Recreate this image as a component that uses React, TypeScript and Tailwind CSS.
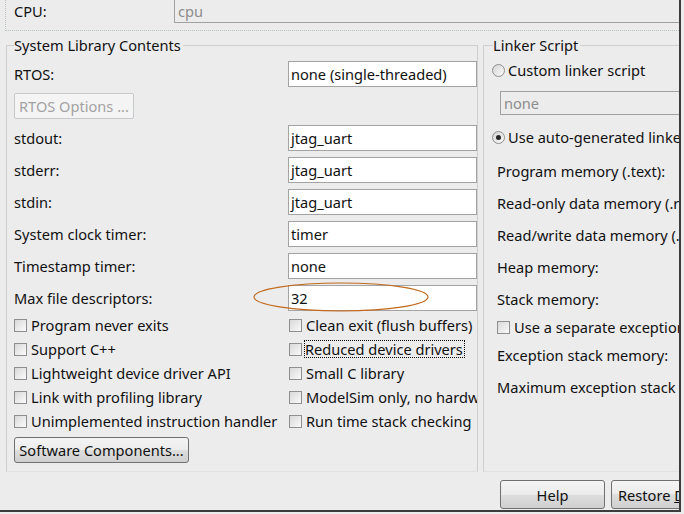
import React from "react";

const btn =
  "flex items-center justify-center rounded-[3px] border border-[#707070] bg-[linear-gradient(to_bottom,#f4f4f4_0%,#ececec_50%,#dedede_50%,#cfcfcf_100%)] whitespace-nowrap";

function Check({ label, focus }: { label: string; focus?: boolean }) {
  return (
    <div className="flex h-[24px] items-center whitespace-nowrap">
      <span className="h-[13px] w-[13px] shrink-0 border border-[#8e8f8f] bg-gradient-to-br from-[#d9d9d9] to-[#fafafa]" />
      {focus ? (
        <span className="ml-[2px] border border-dotted border-black pr-[1px] leading-[16px]">{label}</span>
      ) : (
        <span className="ml-[4px]">{label}</span>
      )}
    </div>
  );
}

function Radio({ label, on }: { label: string; on?: boolean }) {
  return (
    <div className="-ml-[1px] flex h-[24px] items-center whitespace-nowrap">
      <span className="flex h-[13px] w-[13px] shrink-0 items-center justify-center rounded-full border border-[#8e8f8f] bg-gradient-to-br from-[#d4d4d4] to-[#fbfbfb]">
        {on && <span className="h-[5px] w-[5px] rounded-full bg-[#262626]" />}
      </span>
      <span className="ml-[3px]">{label}</span>
    </div>
  );
}

function Row({ label, value, children }: { label: string; value: string; children?: React.ReactNode }) {
  return (
    <div className="relative flex h-[26px] items-center">
      <div className="w-[274px] shrink-0">{label}</div>
      <div className="flex h-full flex-1 items-center overflow-hidden border border-[#a3a3a3] bg-white pl-[2px] whitespace-nowrap">
        {value}
      </div>
      {children}
    </div>
  );
}

export default function App() {
  return (
    <div className="h-[514px] w-[684px] bg-[#ececec] font-['Noto_Sans',sans-serif] text-[14.6px] leading-[20px] text-[#111]">
      <div className="flex h-[512px] w-[681px] flex-col overflow-hidden border-r-2 border-b-2 border-[#3c3c3c]">
        {/* cpu row */}
        <div className="ml-[5px] flex h-[31px] shrink-0 border-b border-l border-dotted border-[#b9c6b9]">
          <div className="flex h-[22px] w-[168px] shrink-0 items-center pl-[8px]">CPU:</div>
          <div className="flex h-[23px] flex-1 items-center border-b border-l border-[#a0a0a0] pl-[3px] text-[#8c8c8c]">
            cpu
          </div>
        </div>

        {/* groups */}
        <div className="mt-[4px] flex h-[437px] shrink-0">
          <fieldset className="ml-[6px] w-[472px] min-w-0 shrink-0 overflow-hidden border border-[#cfcfcf] border-b-[#e2e2e2] pl-[7px]">
            <legend className="pr-[2px]">System Library Contents</legend>
            <div className="mt-[6px] flex flex-col gap-[6px]">
              <Row label="RTOS:" value="none (single-threaded)" />
              <div className="flex h-[26px] w-[120px] items-center rounded-[2px] border border-[#c6c9cc] bg-[#f4f4f4] pl-[4px] text-[#a3a3a3] whitespace-nowrap">
                RTOS Options ...
              </div>
              <Row label="stdout:" value="jtag_uart" />
              <Row label="stderr:" value="jtag_uart" />
              <Row label="stdin:" value="jtag_uart" />
              <Row label="System clock timer:" value="timer" />
              <Row label="Timestamp timer:" value="none" />
              <Row label="Max file descriptors:" value="32">
                <svg className="pointer-events-none absolute left-[239px] top-[-3px]" width="176" height="30" viewBox="0 0 176 30">
                  <ellipse cx="88" cy="15" rx="87" ry="14" fill="none" stroke="#c1691c" strokeWidth="1.2" />
                </svg>
              </Row>
            </div>
            <div className="mt-[2px] grid grid-cols-[275px_1fr]">
              <Check label="Program never exits" />
              <Check label="Clean exit (flush buffers)" />
              <Check label="Support C++" />
              <Check label="Reduced device drivers" focus />
              <Check label="Lightweight device driver API" />
              <Check label="Small C library" />
              <Check label="Link with profiling library" />
              <Check label="ModelSim only, no hardware support" />
              <Check label="Unimplemented instruction handler" />
              <Check label="Run time stack checking" />
            </div>
            <div className={`mt-[4px] h-[26px] w-[175px] ${btn}`}>Software Components...</div>
          </fieldset>

          <fieldset className="ml-[5px] w-[240px] min-w-0 shrink-0 border border-[#cfcfcf] border-b-[#e2e2e2] pl-[9px]">
            <legend className="pr-[2px]">Linker Script</legend>
            <div className="mt-[3px] flex flex-col whitespace-nowrap">
              <Radio label="Custom linker script" />
              <div className="mt-[9px] ml-[7px] flex h-[24px] items-center border border-[#a0a0a0] pl-[3px] text-[#8c8c8c]">none</div>
              <div className="mt-[10px]">
                <Radio label="Use auto-generated linker script" on />
              </div>
              <div className="mt-[6px] flex flex-col pl-[4px]">
                <div className="flex h-[32px] items-center">Program memory (.text):</div>
                <div className="flex h-[32px] items-center">Read-only data memory (.rodata):</div>
                <div className="flex h-[32px] items-center">Read/write data memory (.rwdata):</div>
                <div className="flex h-[32px] items-center">Heap memory:</div>
                <div className="flex h-[32px] items-center">Stack memory:</div>
                <Check label="Use a separate exception stack" />
                <div className="flex h-[32px] items-center">Exception stack memory:</div>
                <div className="flex h-[32px] items-center">Maximum exception stack size:</div>
              </div>
            </div>
          </fieldset>
        </div>

        {/* buttons */}
        <div className="mt-[8px] flex gap-[6px] pl-[500px]">
          <div className={`h-[29px] w-[105px] shrink-0 ${btn}`}>Help</div>
          <div className={`h-[29px] shrink-0 px-[6px] ${btn}`}>
            <span>
              Restore <span className="underline">D</span>efaults
            </span>
          </div>
        </div>
      </div>
    </div>
  );
}
